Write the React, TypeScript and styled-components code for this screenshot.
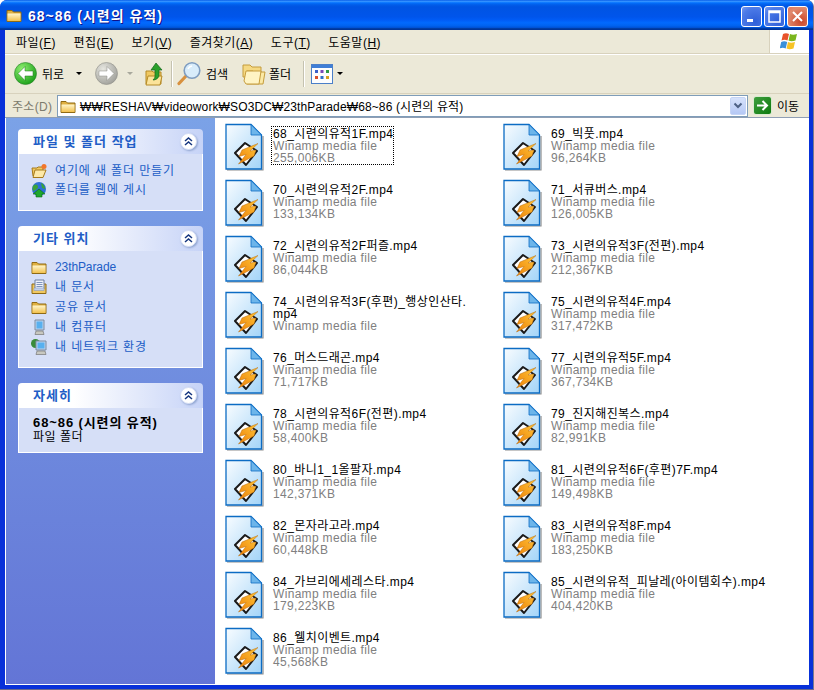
import React from "react";
import styled, { createGlobalStyle } from "styled-components";

const Global = createGlobalStyle`
  html, body { margin: 0; padding: 0; background: #fff; }
  body { font-family: "Liberation Sans", "Noto Sans CJK KR", sans-serif; font-size: 12px; }
  #root { width: 814px; height: 690px; overflow: hidden; }
`;

const Window = styled.div`
  width: 814px; height: 690px; box-sizing: border-box; display: flex; flex-direction: column;
  background: #0831d9; border-radius: 7px 7px 0 0; overflow: hidden;
  border-right: 1px solid #7a7a8c; border-bottom: 1px solid #6a6a8c;
`;
const TitleBar = styled.div`
  height: 30px; flex: none; display: flex; align-items: center; padding: 0 5px 0 6px; box-sizing: border-box;
  background: linear-gradient(to bottom, #0058e6 0%, #3a93ff 4%, #288eff 6%, #127dff 8%, #036ffc 10%, #0262ee 14%, #0057e5 20%, #0054e3 24%, #0055eb 56%, #005bf5 66%, #026afe 76%, #0062ef 86%, #0052d6 92%, #0040ab 94%, #003092 100%);
`;
const TitleText = styled.div`
  margin-left: 6px; flex: 1; color: #fff; font-weight: 700; font-size: 14px; letter-spacing: 1px; text-shadow: 1px 1px 0 #0f1089;
`;
const CtlBtn = styled.div<{ $red?: boolean }>`
  width: 21px; height: 21px; margin-left: 2px; box-sizing: border-box; border: 1px solid #fff; border-radius: 3px;
  display: flex; align-items: center; justify-content: center; margin-top: 2px;
  background: ${p => p.$red ? "radial-gradient(circle at 70% 75%, #cc4628, #e08a6e 70%, #e4775b)" : "radial-gradient(circle at 70% 75%, #2f5fd8, #4d7be8 70%, #7a9cf0)"};
`;
const Body = styled.div`
  flex: 1; min-height: 0; display: flex; flex-direction: column; margin: 0 4px 4px 5px; background: #ece9d8;
`;
const MenuBar = styled.div`
  height: 24px; flex: none; display: flex; box-sizing: border-box; border-bottom: 1px solid #d8d2bd; position: relative; box-shadow: 0 1px 0 #fff;
`;
const Menus = styled.div` flex: 1; display: flex; align-items: center; padding-left: 11px; gap: 17.5px; `;
const MenuItem = styled.span` color: #000; font-size: 12px; letter-spacing: .5px; u { text-decoration: underline; } `;
const LogoBox = styled.div`
  width: 39px; background: #fff; border-left: 1px solid #d8d2bd; display: flex; align-items: center; justify-content: center;
`;
const Toolbar = styled.div`
  height: 40px; flex: none; display: flex; align-items: center; box-sizing: border-box; padding-left: 9px; border-bottom: 1px solid #d8d2bd;
`;
const ToolLabel = styled.span<{ $w: number }>` width: ${p => p.$w}px; font-size: 12px; color: #000; `;
const Sep = styled.div` width: 1px; height: 26px; background: #c5c2b0; box-shadow: 1px 0 0 #fff; `;
const Gap = styled.div<{ $w: number }>` width: ${p => p.$w}px; flex: none; `;
const Caret = styled.div<{ $gray?: boolean }>`
  width: 0; height: 0; border: 3px solid transparent; border-top: 3px solid ${p => p.$gray ? "#a8a89c" : "#000"}; border-bottom: 0;
`;
const AddressBar = styled.div`
  height: 23px; flex: none; display: flex; align-items: center; box-sizing: border-box; padding-left: 7px;
`;
const AddrLabel = styled.span` width: 45px; color: #7d7b6d; font-size: 12px; letter-spacing: .3px; `;
const AddrInput = styled.div`
  width: 691px; height: 22px; box-sizing: border-box; background: #fff; border: 1px solid #7f9db9; display: flex; align-items: center; padding-left: 2px;
`;
const AddrText = styled.span` flex: 1; margin-left: 4px; font-size: 12px; letter-spacing: .12px; color: #000; `;
const Combo = styled.div`
  width: 16px; height: 18px; margin-right: 1px; background: linear-gradient(#d6e2fb, #b5c8f5); border-radius: 2px; border: 1px solid #c5d4f5; box-sizing: border-box;
  display: flex; align-items: center; justify-content: center;
`;
const GoBtn = styled.div`
  width: 19px; height: 19px; margin-left: 5px; border-radius: 3px; background: linear-gradient(135deg, #3f9e3f, #0d7a0d); border: 1px solid #d9ead0; box-sizing: border-box;
  display: flex; align-items: center; justify-content: center;
`;
const GoLabel = styled.span` margin-left: 5px; font-size: 12px; color: #000; `;
const Main = styled.div` flex: 1; min-height: 0; display: flex; background: #fff; border-top: 1px solid #8f9eb4; `;
const Sidebar = styled.div`
  width: 210px; flex: none; box-sizing: border-box; padding: 11px 12px 0 12px; margin-bottom: 1px; border-left: 1px solid #fff;
  background: linear-gradient(to bottom, #7ba2e7, #6375d6); display: flex; flex-direction: column; gap: 15px;
`;
const Panel = styled.div``;
const PanelHead = styled.div`
  height: 25px; box-sizing: border-box; display: flex; align-items: center; justify-content: space-between; padding: 0 6px 0 15px;
  border-radius: 4px 4px 0 0; background: linear-gradient(to right, #fff 30%, #c6d3f7);
`;
const PanelTitle = styled.span` color: #215dc6; font-weight: 700; font-size: 13px; letter-spacing: 1px; margin-bottom: 2px; `;
const Chevron = styled.div`
  width: 17px; height: 17px; border-radius: 50%; background: #fff; box-shadow: 1px 1px 2px #8ea3cf; border: 1px solid #d5def5; box-sizing: border-box;
  display: flex; align-items: center; justify-content: center;
`;
const PanelBody = styled.div<{ $gap: number; $pt: number; $pb: number }>`
  background: #d6dff7; border: 1px solid #fff; border-top: 0; display: flex; flex-direction: column;
  gap: ${p => p.$gap}px; padding: ${p => p.$pt}px 10px ${p => p.$pb}px 12px;
`;
const TaskRow = styled.div` display: flex; align-items: center; height: 16px; line-height: 16px; gap: 8px; `;
const TaskLabel = styled.span<{ $latin?: boolean }>`
  color: #215dc6; font-size: 12px; letter-spacing: ${p => p.$latin ? "-.1px" : ".88px"};
`;
const Details = styled.div` padding: 8px 0 8px 2px; line-height: 14px; color: #000; font-size: 12px; letter-spacing: .5px; `;
const DetailName = styled.div` font-weight: 700; font-size: 13px; letter-spacing: .9px; `;
const Files = styled.div`
  flex: 1; display: grid; grid-template-columns: 278px 278px; grid-auto-rows: 56px; padding: 5px 0 0 10px; align-content: start;
`;
const Tile = styled.div` display: flex; align-items: flex-start; `;
const TileText = styled.div<{ $focus?: boolean }>`
  margin: 4px 0 0 7px; padding: 1px 0 0 1px; line-height: 12px; width: fit-content; white-space: nowrap;
  font-size: 12px; letter-spacing: .42px; color: #000; outline: ${p => p.$focus ? "1px dotted #000" : "0"};
`;
const Sub = styled.div` color: #808080; letter-spacing: .32px; white-space: nowrap; `;

const FileIcon = () => (
  <svg width="40" height="48" viewBox="0 0 40 48" style={{ flex: "none" }}>
    <defs>
      <linearGradient id="pg" x1="0" y1="0" x2="1" y2="1">
        <stop offset="0" stopColor="#f8fcff" /><stop offset="1" stopColor="#a3d4f8" />
      </linearGradient>
      <linearGradient id="zap" x1="1" y1="0" x2="0" y2="1">
        <stop offset="0" stopColor="#ffc83a" /><stop offset="1" stopColor="#ee8008" />
      </linearGradient>
    </defs>
    <path d="M2 47H38V13" fill="none" stroke="#8e8e8e" strokeWidth="1.200" />
    <path d="M1 1.500H26L36.500 12V46H1Z" fill="url(#pg)" stroke="#0c6cc4" strokeWidth="1.300" />
    <path d="M26 1.500V12H36.500Z" fill="#6db5ea" stroke="#0c6cc4" strokeWidth=".8" />
    <path d="M10 30L20 20 32 28 21 42Z" fill="#fff" stroke="#1a1a1a" strokeWidth="2" strokeLinejoin="round" />
    <path d="M33 20.500L17 27 14 33.500 21 31.500 13.500 41 29 33 31 27 25 28Z" fill="url(#zap)" stroke="#b86a0a" strokeWidth=".5" />
  </svg>
);
const Folder = ({ s = 16 }: { s?: number }) => (
  <svg width={s} height={s} viewBox="0 0 16 16" style={{ flex: "none" }}>
    <defs>
      <linearGradient id="fo" x1="0" y1="0" x2="0" y2="1">
        <stop offset="0" stopColor="#fff6cc" /><stop offset="1" stopColor="#f2c14e" />
      </linearGradient>
    </defs>
    <path d="M1 3.500h5l1.500 1.500H15V14.500H1Z" fill="#e0b040" stroke="#8f6a14" strokeWidth="1" />
    <path d="M1.500 6.500H14.500V14H1.500Z" fill="url(#fo)" />
  </svg>
);
const NewFolder = () => (
  <svg width="16" height="16" viewBox="0 0 16 16" style={{ flex: "none" }}>
    <path d="M1 5h5l1-1h5v9H2Z" fill="#f0c860" stroke="#a67a1c" />
    <path d="M2 14.500L4 7h11l-3 7.500Z" fill="#fde9a8" stroke="#a67a1c" />
    <circle cx="13" cy="3.500" r="2.500" fill="#f2762b" />
  </svg>
);
const Globe = () => (
  <svg width="16" height="16" viewBox="0 0 16 16" style={{ flex: "none" }}>
    <circle cx="8" cy="7" r="7" fill="#2c6fd6" />
    <path d="M2 4c3-3 5-1 5 1s-3 3-4 4-2-3-1-5ZM10 1c3 1 4 4 4 6l-3-1Z" fill="#3aa33a" />
    <path d="M8 7l6 5h-3v3H5v-3H2Z" fill="#1fa72c" stroke="#0b6b16" strokeWidth=".6" />
  </svg>
);
const DocsFolder = () => (
  <svg width="16" height="16" viewBox="0 0 16 16" style={{ flex: "none" }}>
    <path d="M1 5h14v9.500H1Z" fill="#f0c860" stroke="#8f6a14" />
    <path d="M4 1h9v9H4Z" fill="#eef2fa" stroke="#6f7f9f" />
    <path d="M5.500 3.500h6M5.500 5.500h6M5.500 7.500h6" stroke="#7f94bd" />
    <path d="M3 9h10v2.500H3Z" fill="#c3d1ec" stroke="#7f94bd" strokeWidth=".5" />
  </svg>
);
const Computer = () => (
  <svg width="16" height="16" viewBox="0 0 16 16" style={{ flex: "none" }}>
    <path d="M4 1h9v10H4Z" fill="#bcd2ee" stroke="#7d8ba0" />
    <path d="M5.500 2.500h6v7h-6Z" fill="#58b0ef" />
    <path d="M5 12h7l1 3.500H4Z" fill="#c8c8c0" stroke="#777" strokeWidth=".7" />
  </svg>
);
const Network = () => (
  <svg width="16" height="16" viewBox="0 0 16 16" style={{ flex: "none" }}>
    <circle cx="4.500" cy="4.500" r="4.500" fill="#3a8c3a" />
    <path d="M5 2h10v9H5Z" fill="#bcd2ee" stroke="#7d8ba0" />
    <path d="M6.500 3.500h7v6h-7Z" fill="#58b0ef" />
    <path d="M6 12h8l1 3.500H5Z" fill="#c8c8c0" stroke="#777" strokeWidth=".7" />
  </svg>
);
const Chev = () => (
  <svg width="9" height="9" viewBox="0 0 9 9">
    <path d="M1 4l3.500-3L8 4M1 8l3.500-3L8 8" fill="none" stroke="#16367f" strokeWidth="1.500" />
  </svg>
);
const NavCircle = ({ gray, dir }: { gray?: boolean; dir: "l" | "r" }) => (
  <svg width="23" height="23" viewBox="0 0 23 23" style={{ flex: "none" }}>
    <defs>
      <radialGradient id={gray ? "ng" : "nb"} cx=".35" cy=".3" r=".8">
        <stop offset="0" stopColor={gray ? "#e6e6e0" : "#8ff070"} />
        <stop offset="1" stopColor={gray ? "#9c9c96" : "#139a13"} />
      </radialGradient>
    </defs>
    <circle cx="11.500" cy="11.500" r="11" fill={`url(#${gray ? "ng" : "nb"})`} stroke={gray ? "#8f8f88" : "#2a7f2a"} strokeWidth=".6" />
    <path d={dir === "l" ? "M4 11.500L11 4.500v4.500h8v5h-8v4.500Z" : "M19 11.500L12 4.500v4.500H4v5h8v4.500Z"} fill="#fff" stroke={gray ? "#8a8a84" : "#1b6e1b"} strokeWidth=".5" />
  </svg>
);
const UpFolder = () => (
  <svg width="18" height="24" viewBox="0 0 18 24" style={{ flex: "none" }}>
    <path d="M1 9h6l1 1h8v12H1Z" fill="#f0c860" stroke="#b58a26" />
    <path d="M1 23l2-9h14l-2 9Z" fill="#fbe39a" stroke="#b58a26" />
    <path d="M11 1l6 7h-3v5c0 3-3 5-6 5 2-2 2-3 2-5V8H6Z" fill="#2ba02b" stroke="#14651a" strokeWidth=".7" />
  </svg>
);
const Search = () => (
  <svg width="25" height="25" viewBox="0 0 25 25" style={{ flex: "none" }}>
    <path d="M9 15L2 22.500" stroke="#d8913f" strokeWidth="3.200" strokeLinecap="round" />
    <circle cx="15" cy="9.500" r="7.800" fill="#d8ecfa" stroke="#7f9dc0" strokeWidth="1.600" />
    <path d="M11 8a5 5 0 0 1 4-3" stroke="#fff" strokeWidth="1.500" fill="none" />
  </svg>
);
const TwoFolders = () => (
  <svg width="24" height="22" viewBox="0 0 24 22" style={{ flex: "none" }}>
    <path d="M1 2h7l2 2h9v10H1Z" fill="#f5d983" stroke="#c59c3c" />
    <path d="M5 8h6l1 1h9l2 0-2 12H5Z" fill="#fbe9a6" stroke="#c59c3c" />
    <path d="M2 18l2-10h15l-2 13H4Z" fill="#fff4c4" stroke="#c59c3c" />
  </svg>
);
const Views = () => (
  <svg width="22" height="20" viewBox="0 0 22 20" style={{ flex: "none" }}>
    <rect x=".5" y=".5" width="21" height="19" fill="#fdfdfd" stroke="#4b7fc8" />
    <rect x="1" y="1" width="20" height="3" fill="#3f7ed6" />
    <g>
      <rect x="4" y="6" width="3" height="3" fill="#3a60c8" /><rect x="9.500" y="6" width="3" height="3" fill="#7b48b8" /><rect x="15" y="6" width="3" height="3" fill="#2f9a48" />
      <rect x="4" y="12" width="3" height="3" fill="#d8502a" /><rect x="9.500" y="12" width="3" height="3" fill="#2f6fc8" /><rect x="15" y="12" width="3" height="3" fill="#d8a020" />
    </g>
  </svg>
);
const XpLogo = () => (
  <svg width="20" height="19" viewBox="0 0 20 19">
    <path d="M3 2c2-1 4-1 6 0L7.500 8.500c-2-1-4-1-6 0Z" fill="#e8532b" />
    <path d="M10 2c2 1 4 1 7 0l-1.500 6.500c-3 1-5 1-7 0Z" fill="#7ab51d" />
    <path d="M1.200 10c2-1 4-1 6 0L5.700 16.500c-2-1-4-1-6 0Z" fill="#3a8fd8" />
    <path d="M8 10c2 1 4 1 7 0l-1.500 6.500c-3 1-5 1-7 0Z" fill="#f7c325" />
  </svg>
);

type F = { name: string; size?: string; focus?: boolean };
const files: F[] = [
  { name: "68_시련의유적1F.mp4", size: "255,006KB", focus: true },
  { name: "69_빅풋.mp4", size: "96,264KB" },
  { name: "70_시련의유적2F.mp4", size: "133,134KB" },
  { name: "71_서큐버스.mp4", size: "126,005KB" },
  { name: "72_시련의유적2F퍼즐.mp4", size: "86,044KB" },
  { name: "73_시련의유적3F(전편).mp4", size: "212,367KB" },
  { name: "74_시련의유적3F(후편)_행상인산타.mp4" },
  { name: "75_시련의유적4F.mp4", size: "317,472KB" },
  { name: "76_머스드래곤.mp4", size: "71,717KB" },
  { name: "77_시련의유적5F.mp4", size: "367,734KB" },
  { name: "78_시련의유적6F(전편).mp4", size: "58,400KB" },
  { name: "79_진지해진복스.mp4", size: "82,991KB" },
  { name: "80_바니1_1올팔자.mp4", size: "142,371KB" },
  { name: "81_시련의유적6F(후편)7F.mp4", size: "149,498KB" },
  { name: "82_몬자라고라.mp4", size: "60,448KB" },
  { name: "83_시련의유적8F.mp4", size: "183,250KB" },
  { name: "84_가브리에세레스타.mp4", size: "179,223KB" },
  { name: "85_시련의유적_피날레(아이템회수).mp4", size: "404,420KB" },
  { name: "86_웰치이벤트.mp4", size: "45,568KB" },
];
const menus: [string, string][] = [["파일", "F"], ["편집", "E"], ["보기", "V"], ["즐겨찾기", "A"], ["도구", "T"], ["도움말", "H"]];
const places: [React.ReactNode, string, boolean?][] = [
  [<Folder key="a" />, "23thParade", true], [<DocsFolder key="b" />, "내 문서"], [<Folder key="c" />, "공유 문서"],
  [<Computer key="d" />, "내 컴퓨터"], [<Network key="e" />, "내 네트워크 환경"],
];

const Head = ({ t }: { t: string }) => (
  <PanelHead><PanelTitle>{t}</PanelTitle><Chevron><Chev /></Chevron></PanelHead>
);

export default function App() {
  return (
    <Window>
      <Global />
      <TitleBar>
        <Folder />
        <TitleText>68~86 (시련의 유적)</TitleText>
        <CtlBtn>
          <svg width="11" height="11" viewBox="0 0 11 11"><rect x="1" y="8" width="6" height="3" fill="#fff" /></svg>
        </CtlBtn>
        <CtlBtn>
          <svg width="13" height="13" viewBox="0 0 13 13"><path d="M1 1h11v11H1ZM1 2.500h11" fill="none" stroke="#fff" strokeWidth="1.500" /></svg>
        </CtlBtn>
        <CtlBtn $red>
          <svg width="13" height="13" viewBox="0 0 13 13"><path d="M2 2l9 9M11 2l-9 9" stroke="#fff" strokeWidth="2" /></svg>
        </CtlBtn>
      </TitleBar>
      <Body>
        <MenuBar>
          <Menus>
            {menus.map(([k, u]) => <MenuItem key={u}>{k}(<u>{u}</u>)</MenuItem>)}
          </Menus>
          <LogoBox><XpLogo /></LogoBox>
        </MenuBar>
        <Toolbar>
          <NavCircle dir="l" />
          <Gap $w={5} /><ToolLabel $w={34}>뒤로</ToolLabel><Caret /><Gap $w={13} />
          <NavCircle dir="r" gray />
          <Gap $w={9} /><Caret $gray /><Gap $w={12} />
          <UpFolder />
          <Gap $w={8} /><Sep /><Gap $w={5} />
          <Search />
          <Gap $w={4} /><ToolLabel $w={36}>검색</ToolLabel>
          <TwoFolders />
          <Gap $w={3} /><ToolLabel $w={34}>폴더</ToolLabel>
          <Sep /><Gap $w={7} />
          <Views />
          <Gap $w={4} /><Caret />
        </Toolbar>
        <AddressBar>
          <AddrLabel>주소(D)</AddrLabel>
          <AddrInput>
            <Folder />
            <AddrText>₩₩RESHAV₩videowork₩SO3DC₩23thParade₩68~86 (시련의 유적)</AddrText>
            <Combo>
              <svg width="10" height="8" viewBox="0 0 10 8"><path d="M1.500 1.500L5 5l3.500-3.500" fill="none" stroke="#4d6185" strokeWidth="2" /></svg>
            </Combo>
          </AddrInput>
          <GoBtn>
            <svg width="13" height="13" viewBox="0 0 13 13"><path d="M1 6.500h9M6.500 2l4.500 4.500L6.500 11" fill="none" stroke="#fff" strokeWidth="2" /></svg>
          </GoBtn>
          <GoLabel>이동</GoLabel>
        </AddressBar>
        <Main>
          <Sidebar>
            <Panel>
              <Head t="파일 및 폴더 작업" />
              <PanelBody $gap={3} $pt={9} $pb={12}>
                <TaskRow><NewFolder /><TaskLabel>여기에 새 폴더 만들기</TaskLabel></TaskRow>
                <TaskRow><Globe /><TaskLabel>폴더를 웹에 게시</TaskLabel></TaskRow>
              </PanelBody>
            </Panel>
            <Panel>
              <Head t="기타 위치" />
              <PanelBody $gap={4} $pt={8} $pb={12}>
                {places.map(([i, t, l]) => <TaskRow key={t}>{i}<TaskLabel $latin={l}>{t}</TaskLabel></TaskRow>)}
              </PanelBody>
            </Panel>
            <Panel>
              <Head t="자세히" />
              <PanelBody $gap={0} $pt={0} $pb={0}>
                <Details>
                  <DetailName>68~86 (시련의 유적)</DetailName>
                  파일 폴더
                </Details>
              </PanelBody>
            </Panel>
          </Sidebar>
          <Files>
            {files.map(f => (
              <Tile key={f.name}>
                <FileIcon />
                <TileText $focus={f.focus}>
                  {f.size ? f.name : <>74_시련의유적3F(후편)_행상인산타.<br />mp4</>}
                  <Sub>Winamp media file</Sub>
                  {f.size && <Sub>{f.size}</Sub>}
                </TileText>
              </Tile>
            ))}
          </Files>
        </Main>
      </Body>
    </Window>
  );
}
